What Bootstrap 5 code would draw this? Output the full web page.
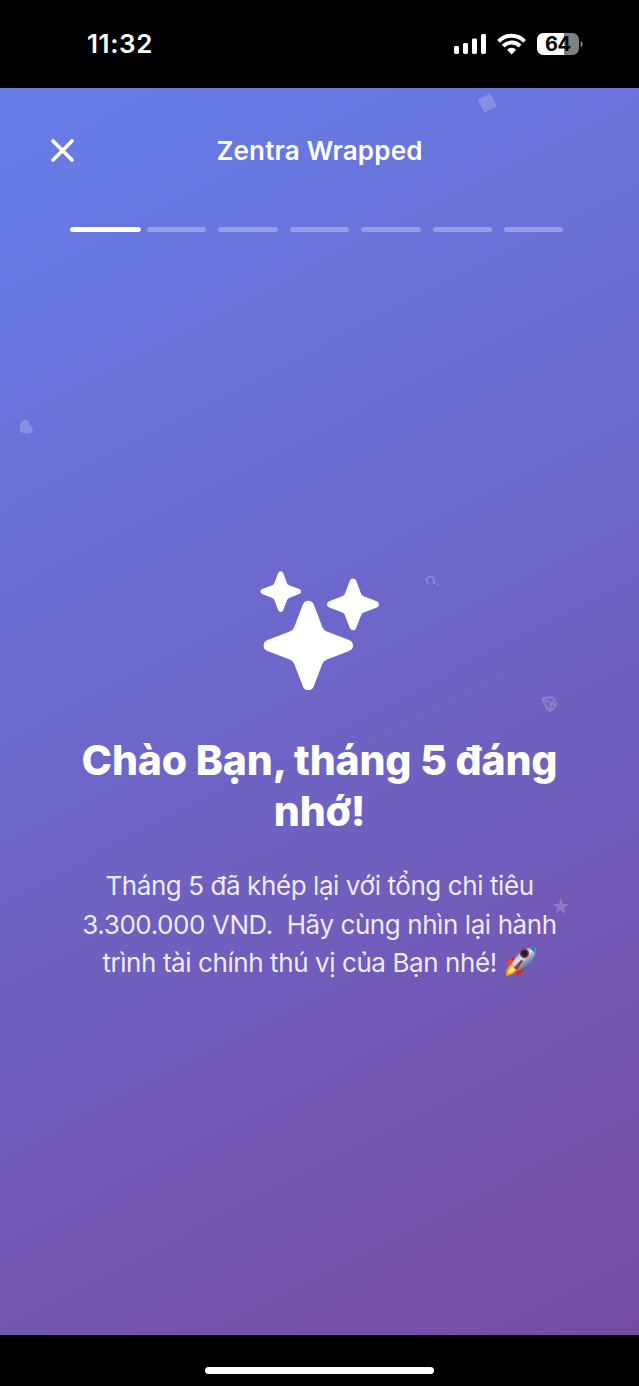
<!DOCTYPE html>
<html lang="vi">
<head>
<meta charset="utf-8">
<meta name="viewport" content="width=device-width, initial-scale=1">
<title>Zentra Wrapped</title>
<link rel="stylesheet" href="https://cdn.jsdelivr.net/npm/bootstrap@5.3.0/dist/css/bootstrap.min.css">
<style>
body{font-family:Inter,"Liberation Sans",sans-serif;background:#000;height:1386px}
.statusbar{height:88px;padding:0 56px 0 87px}
.clock{font-size:26px;font-weight:600;line-height:88px;letter-spacing:.6px}
.story{height:1247px;background:linear-gradient(152.87deg,#667eea 0%,#764ba2 100%)}
.story-head{height:124px;padding:0 50px}
.story-title{font-size:26px;font-weight:600;letter-spacing:.18px;line-height:36px;padding-top:1px}
.close-x,.head-spacer{width:25px;height:25px}
.steps{padding:0 75.6px;gap:12px;margin-top:15px}
.step{height:5px;border-radius:3px;background:rgba(255,255,255,.3)}
.step.on{background:#fff;transform:scaleX(1.2)}
.sparkles{width:120px;height:120px;margin-top:339px}
.headline{font-size:41px;font-weight:800;line-height:50.5px;letter-spacing:-.17px;margin-top:44px}
.summary{font-size:26px;line-height:38.7px;letter-spacing:-.42px;color:rgba(255,255,255,.9);margin-top:31px}
.rocket{width:33px;height:31px;vertical-align:-5px}
.deco{opacity:.2;fill:#fff}
.homebar{width:229px;height:7px;border-radius:4px;margin-top:32px}
</style>
<script src="https://cdn.jsdelivr.net/npm/bootstrap@5.3.0/dist/js/bootstrap.bundle.min.js"></script>
</head>
<body class="text-white overflow-hidden d-flex flex-column">
<header class="statusbar d-flex align-items-center justify-content-between">
  <span class="clock">11:32</span>
  <svg width="130" height="26" viewBox="453 30 130 26" fill="#fff">
    <rect x="454" y="45" width="5" height="8" rx="1.4"/><rect x="463" y="42" width="5" height="11" rx="1.4"/><rect x="472" y="37.500" width="5" height="15.500" rx="1.400"/><rect x="481" y="33" width="5" height="20" rx="1.4"/>
    <g fill="none" stroke="#fff" stroke-width="3.9"><path d="M498.600 40.300a18 18 0 0 1 26 0"/><path d="M503.200 45.100a11.700 11.700 0 0 1 16.800 0"/></g>
    <path d="M507 48.700a6.500 6.500 0 0 1 9.200 0l-4.600 4.700z"/>
    <clipPath id="charge"><rect x="537" y="32" width="27" height="22"/></clipPath>
    <rect x="537" y="32" width="42" height="22" rx="6.500" fill="#818181"/>
    <rect x="537" y="32" width="42" height="22" rx="6.500" clip-path="url(#charge)"/>
    <path d="M580.500 40q2.500 1 2.500 3.200t-2.500 3.200z" fill="#777"/>
    <text x="558" y="50.200" text-anchor="middle" font-size="20" font-weight="700" fill="#000" textLength="26">64</text>
  </svg>
</header>
<main class="story position-relative text-center">
  <div class="story-head d-flex align-items-center justify-content-between">
    <svg class="close-x" viewBox="0 0 25 25" stroke="#fff" stroke-width="3.7" stroke-linecap="round"><path d="M3 3l19 19M22 3L3 22"/></svg>
    <div class="story-title">Zentra Wrapped</div>
    <div class="head-spacer"></div>
  </div>
  <div class="steps d-flex">
    <div class="step on flex-fill"></div><div class="step flex-fill"></div><div class="step flex-fill"></div><div class="step flex-fill"></div><div class="step flex-fill"></div><div class="step flex-fill"></div><div class="step flex-fill"></div>
  </div>
  <svg class="sparkles d-block mx-auto" viewBox="260 571 120 120" fill="#fff">
    <defs><path id="spark" d="M-5.500-40.800Q-4-44.700 0-44.700T5.500-40.800L14-18.500Q15.200-15.200 18.500-14L40.800-5.500Q44.700-4 44.700 0T40.800 5.500L18.500 14Q15.200 15.200 14 18.500L5.500 40.800Q4 44.700 0 44.700T-5.500 40.800L-14 18.500Q-15.200 15.200-18.500 14L-40.800 5.500Q-44.700 4-44.700 0T-40.800-5.500L-18.500-14Q-15.200-15.200-14-18.500Z"/></defs>
    <use href="#spark" transform="translate(308.300 645.400)"/>
    <use href="#spark" transform="translate(280.700 591.600) scale(.455)"/>
    <use href="#spark" transform="translate(353 604.400) scale(.58)"/>
  </svg>
  <h1 class="headline mb-0"><span>Chào Bạn, tháng 5 đáng</span><br><span>nhớ!</span></h1>
  <p class="summary mb-0"><span>Tháng 5 đã khép lại với tổng chi tiêu</span><br><span>3.300.000 VND.&nbsp; Hãy cùng nhìn lại hành</span><br><span>trình tài chính thú vị của Bạn nhé!</span>
    <svg class="rocket" viewBox="0 0 33 31">
      <defs><linearGradient id="hull" x1=".25" y1=".2" x2=".7" y2=".8"><stop offset="0" stop-color="#5f9fd0"/><stop offset=".4" stop-color="#d5e5ee"/><stop offset=".7" stop-color="#8b9fb4"/><stop offset="1" stop-color="#486b91"/></linearGradient></defs>
      <path d="M12 12Q6 9 1 18l7-1zM13 22l7-5q2 5-4 12l-4 1z" fill="#d52e20"/>
      <path d="M1 18l5-5 4 2-2 3z" fill="#f04b25"/>
      <path d="M8 17Q1 22 2 30q8-1 12-7z" fill="#f49a25"/><path d="M8 20q-4 4-4 8 5-1 8-5z" fill="#ffe779"/>
      <path d="M8 18Q15 2 31 1q2 5-2 12-5 8-15 12z" fill="url(#hull)"/>
      <path d="M25 2q3-1 6-1 1 4 0 7-2-4-6-6z" fill="#367ec0"/>
      <circle cx="20.500" cy="7.500" r="4.500" fill="#8d2632"/><circle cx="20.500" cy="7.500" r="2.900" fill="#171f38"/>
      <path d="M10 22l7-8 2 1-6 9z" fill="#b72731"/>
    </svg>
  </p>
  <svg class="position-absolute top-0 start-0 w-100 h-100" viewBox="0 88 639 1247" aria-hidden="true">
    <rect class="deco" x="480.200" y="95.900" width="14.200" height="14.200" rx=".8" transform="rotate(-29 487.300 103)"/>
    <path class="deco" d="M20 431.500Q19.500 423 22.500 420.800Q26 418.500 28.600 421.500Q29.600 423 29.300 425Q32.500 426 32.900 429Q33 432.500 29.500 433.300Q24 434.300 20 431.500Z"/>
    <path d="M428 583.500Q425.500 581 427.500 577.800Q430.500 575 433.200 578Q434.500 579.700 433.500 582.500L435 583.300M437.500 584.500l.5.300" fill="none" stroke="#fff" stroke-opacity=".22" stroke-width="1.700" stroke-linecap="round"/>
    <path class="deco" fill-rule="evenodd" d="M541 698Q547 695.500 553 696.500Q557.500 700 556.800 704.500Q556 709 549.500 712Q545 709 544 704ZM544 699L551.500 702L554 698.500ZM544.500 701L549 709L550 703.200ZM552.500 704.500l-1.500 4 3.500-2.500zM553.500 702l2-2 .3 3z"/>
    <path class="deco" d="M560.700 898l2 5.900h6.300l-5 3.800 1.900 6.200-5.200-3.700-5.300 3.700 2-6.200-5-3.800h6.300z"/>
  </svg>
</main>
<footer class="d-flex"><div class="homebar bg-white mx-auto"></div></footer>
</body>
</html>
